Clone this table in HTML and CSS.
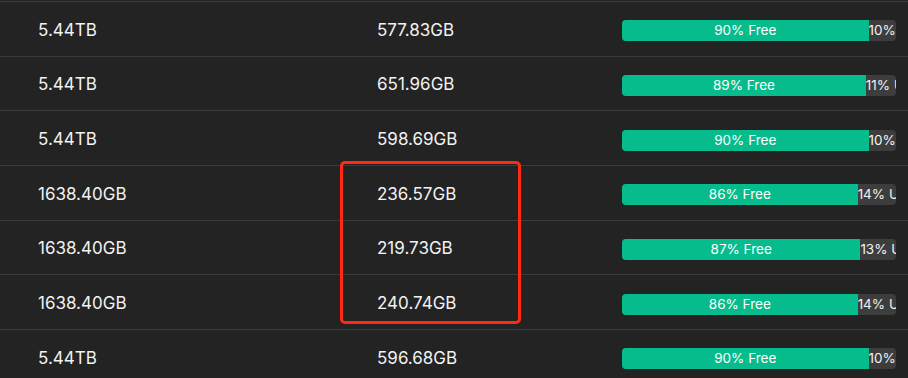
FILE: index.html
```html
<!DOCTYPE html>
<html>
<head>
<meta charset="utf-8">
<link rel="stylesheet" href="styles.css">
</head>
<body>
<div class="table">
  <div class="row"><div class="c1">5.44TB</div><div class="c2">577.83GB</div><div class="c3"><div class="bar"><div class="free" style="width:90%">90% Free</div><div class="used">10% Used</div></div></div></div>
  <div class="row"><div class="c1">5.44TB</div><div class="c2">651.96GB</div><div class="c3"><div class="bar"><div class="free" style="width:89%">89% Free</div><div class="used">11% Used</div></div></div></div>
  <div class="row"><div class="c1">5.44TB</div><div class="c2">598.69GB</div><div class="c3"><div class="bar"><div class="free" style="width:90%">90% Free</div><div class="used">10% Used</div></div></div></div>
  <div class="row"><div class="c1">1638.40GB</div><div class="c2">236.57GB</div><div class="c3"><div class="bar"><div class="free" style="width:86%">86% Free</div><div class="used">14% Used</div></div></div></div>
  <div class="row"><div class="c1">1638.40GB</div><div class="c2">219.73GB</div><div class="c3"><div class="bar"><div class="free" style="width:87%">87% Free</div><div class="used">13% Used</div></div></div></div>
  <div class="row"><div class="c1">1638.40GB</div><div class="c2">240.74GB</div><div class="c3"><div class="bar"><div class="free" style="width:86%">86% Free</div><div class="used">14% Used</div></div></div></div>
  <div class="row"><div class="c1">5.44TB</div><div class="c2">596.68GB</div><div class="c3"><div class="bar"><div class="free" style="width:90%">90% Free</div><div class="used">10% Used</div></div></div></div>
  <div class="highlight"></div>
</div>
</body>
</html>
```
FILE: styles.css
```css
html, body {
  margin: 0;
  padding: 0;
  background: #232323;
  overflow: hidden;
}
body {
  font-family: Inter, "Noto Sans", "Liberation Sans", sans-serif;
  color: #f2f2f2;
  width: 908px;
  height: 378px;
}
.table {
  position: relative;
  padding-top: 1px;
}
.row {
  box-sizing: border-box;
  height: 54.67px;
  border-top: 1px solid #3b3b3b;
  display: grid;
  grid-template-columns: 377px 245px 274px;
  align-items: center;
  padding-top: 2px;
  font-size: 17px;
}
.c1 {
  padding-left: 38px;
}
.bar {
  display: flex;
  height: 21px;
  border-radius: 4px;
  overflow: hidden;
  background: #3d3d3d;
  font-size: 13.5px;
  line-height: 21px;
  margin-top: 2px;
}
.free {
  flex: none;
  background: #06bc8c;
  text-align: center;
  color: #fff;
}
.used {
  flex: 1;
  min-width: 0;
  white-space: nowrap;
  overflow: hidden;
  color: #f2f2f2;
}
.highlight {
  position: absolute;
  left: 340px;
  top: 161px;
  width: 181px;
  height: 163px;
  box-sizing: border-box;
  border: 3px solid #ff2a14;
  border-radius: 5px;
}
```
